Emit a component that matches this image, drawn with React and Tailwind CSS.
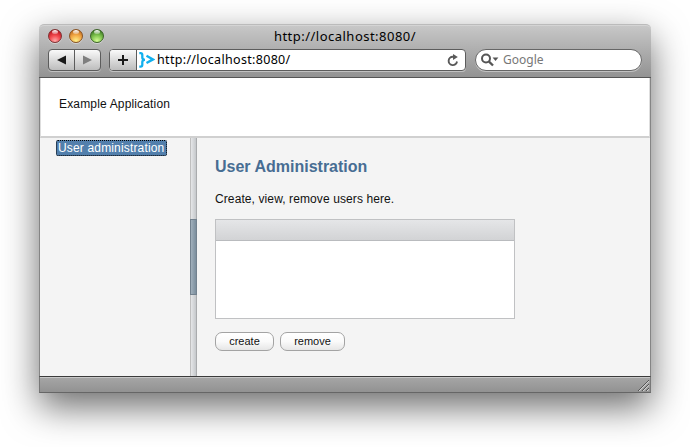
const shell = "bg-gradient-to-b from-[#fafafa] to-[#bdbdbd]";
const lucida = "font-['Noto_Sans','Open_Sans',sans-serif]";

function Light({ className }) {
  return (
    <span className={`relative h-[14px] w-[14px] overflow-hidden rounded-full border shadow-[0_1px_0_rgba(255,255,255,0.4)] ${className}`}>
      <span className="absolute left-[3px] top-0 h-[4px] w-[6px] rounded-full bg-gradient-to-b from-white to-white/30" />
    </span>
  );
}

function NavButtons() {
  return (
    <div className={`flex h-[22px] w-[53px] rounded-[4px] border border-[#5c5c5c] shadow-[0_1px_0_rgba(255,255,255,0.4)] ${shell}`}>
      <div className="flex w-[26px] items-center justify-center border-r border-[#5c5c5c]">
        <svg width="9" height="10" viewBox="0 0 9 10"><path d="M9 0.5V9.5L0 5Z" fill="#1a1a1a" /></svg>
      </div>
      <div className="flex flex-1 items-center justify-center">
        <svg width="9" height="10" viewBox="0 0 9 10"><path d="M0 0.5V9.5L9 5Z" fill="#7f7f7f" /></svg>
      </div>
    </div>
  );
}

function AddressBar() {
  return (
    <div className="ml-2 flex h-[22px] w-[357px] overflow-hidden rounded-[4px] border border-[#5c5c5c] bg-white shadow-[0_1px_0_rgba(255,255,255,0.4)]">
      <div className={`flex w-[27px] items-center justify-center border-r border-[#5c5c5c] ${shell}`}>
        <svg width="10" height="10" viewBox="0 0 10 10"><path d="M5 0V10M0 5H10" stroke="#1a1a1a" strokeWidth="2" /></svg>
      </div>
      <svg className="ml-[2px] mt-[2px]" width="16" height="17" viewBox="0 0 16 17" fill="none" stroke="#12b0ee">
        <path d="M0.3 1.2H1.6Q3.3 1.2 3.3 3V5.6Q3.3 7.8 6 7.8Q3.3 7.8 3.3 10V12.7Q3.3 14.6 1.6 14.6H0.3" strokeWidth="2.3" />
        <path d="M7.5 3.8L14 7.4L7.5 11" strokeWidth="2.4" />
      </svg>
      <span className={`ml-[2px] text-[12.5px] leading-[20px] tracking-[0.32px] text-black ${lucida}`}>http://localhost:8080/</span>
      <svg className="ml-auto mr-[6px] mt-[4px]" width="12" height="13" viewBox="0 0 12 13" fill="none">
        <path d="M7.2 2.7H5.8A4.2 4.2 0 1 0 10 7.5" stroke="#595959" strokeWidth="1.9" />
        <path d="M6 0L10.8 2.9L6 5.9Z" fill="#595959" />
      </svg>
    </div>
  );
}

function SearchBox() {
  return (
    <div className="ml-[9px] flex h-[22px] w-[167px] rounded-full border border-[#666] bg-white shadow-[0_1px_0_rgba(255,255,255,0.4)]">
      <svg className="ml-[5px] mt-[3px]" width="18" height="14" viewBox="0 0 18 14" fill="none">
        <circle cx="5" cy="5.5" r="4" stroke="#555" strokeWidth="2" />
        <path d="M8 8.6L12 12.5" stroke="#555" strokeWidth="2.3" />
        <path d="M11.6 4.5H17.4L14.5 8Z" fill="#555" />
      </svg>
      <span className={`ml-[4px] text-[12px] leading-[20px] text-[#777] ${lucida}`}>Google</span>
    </div>
  );
}

function TitleBar() {
  return (
    <header className="h-[54px] rounded-t-[5px] border-b border-b-[#555] border-t border-t-[#bbb] bg-gradient-to-b from-[#c8c8c8] to-[#939393] pl-[9px] pr-[8px] shadow-[inset_0_1px_0_#d4d4d4]">
      <div className="relative flex h-[24px] items-start gap-[7px] pt-[4px]">
        <Light className="border-[#7e3132] bg-[radial-gradient(circle_at_50%_90%,#ffaaaa_0%,#f34b50_42%,#b30c18_90%)]" />
        <Light className="border-[#875222] bg-[radial-gradient(circle_at_50%_90%,#fff28b_0%,#f2a744_48%,#b9651b_90%)]" />
        <Light className="border-[#3c6427] bg-[radial-gradient(circle_at_50%_90%,#d5ff95_0%,#7bbf4b_48%,#356f20_90%)]" />
        <h1 className={`absolute inset-x-0 top-[1px] pr-px text-center text-[13px] leading-[20px] tracking-[0.48px] text-black ${lucida}`}>http://localhost:8080/</h1>
      </div>
      <div className="flex">
        <NavButtons />
        <AddressBar />
        <SearchBox />
      </div>
    </header>
  );
}

function PillButton({ className, children }) {
  return (
    <button className={`h-[19px] rounded-[7px] border border-[#a3a3a3] bg-gradient-to-b from-white via-[#fafafa] to-[#e6e6e6] text-center text-[11px] leading-[17px] text-[#111] ${className}`}>
      {children}
    </button>
  );
}

export default function App() {
  return (
    <div className="h-[447px] w-[690px] overflow-hidden bg-white pl-[39px] pt-[24px] font-['Liberation_Sans',Arial,sans-serif] text-[12px] text-[#111]">
      <div className="flex h-[369px] w-[612px] flex-col rounded-t-[5px] shadow-[0_14px_36px_rgba(0,0,0,0.58)]">
        <TitleBar />
        <div className="flex h-[298px] flex-col border-x border-[#858585] bg-[#f4f4f4]">
          <div className="h-[60px] border-x border-b-2 border-x-[#dedede] border-b-[#d0d0d0] bg-white pl-[18px] pt-[18px] leading-[16px] tracking-[0.16px]">
            Example Application
          </div>
          <div className="flex flex-1">
            <nav className="w-[150px] pl-[16px] pt-[2px]">
              <div className="h-[16px] w-[111px] whitespace-nowrap rounded-[2px] border border-dotted border-black bg-[#527fac] pl-[1px] leading-[14px] tracking-[0.16px] text-white">
                User administration
              </div>
            </nav>
            <div className="w-[7px] border-x border-l-[#bfbfbf] border-r-[#a9abad] bg-gradient-to-r from-[#e5e6e8] to-[#c5c8cb] pt-[81px]">
              <div className="-mx-px h-[76px] border border-[#72818e] bg-gradient-to-r from-[#a1b0bc] to-[#7b8e9d]" />
            </div>
            <main className="flex-1 pl-[18px] pt-[19px]">
              <h2 className="text-[16px] font-bold leading-[20px] text-[#476d93]">User Administration</h2>
              <p className="mt-[14px] leading-[16px] tracking-[0.1px]">Create, view, remove users here.</p>
              <div className="mt-[12px] h-[100px] w-[300px] border border-[#c0c1c3] bg-white">
                <div className="h-[21px] border-b border-[#b9bbbe] bg-gradient-to-b from-[#e5e6e8] to-[#d2d3d5]" />
              </div>
              <div className="mt-[13px] flex gap-[6px]">
                <PillButton className="w-[59px]">create</PillButton>
                <PillButton className="w-[65px]">remove</PillButton>
              </div>
            </main>
          </div>
        </div>
        <footer className="flex h-[17px] items-end justify-end border border-x-[#777] border-b-[#666] border-t-[#3b3b3b] bg-gradient-to-b from-[#a6a6a6] to-[#929292] shadow-[inset_0_1px_0_#c8c8c8]">
          <svg className="mb-px mr-px" width="11" height="11" viewBox="0 0 11 11">
            <path d="M1 11L11 1M5 11L11 5M9 11L11 9" stroke="#d0d0d0" strokeWidth="1.2" />
            <path d="M0 11L11 0M4 11L11 4M8 11L11 8" stroke="#555" strokeWidth="1" />
          </svg>
        </footer>
      </div>
    </div>
  );
}
